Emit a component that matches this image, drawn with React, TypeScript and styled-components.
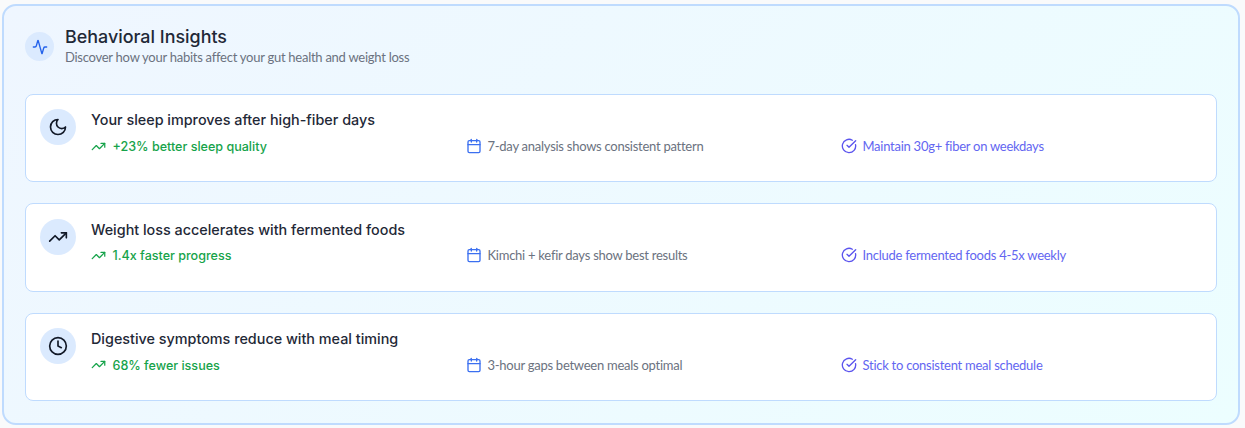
import React from "react";
import styled, { createGlobalStyle } from "styled-components";

const Global = createGlobalStyle`
  html, body { margin: 0; padding: 0; background: #f9fafb; }
  body { font-family: Inter, "Liberation Sans", sans-serif; }
`;

const Page = styled.div`
  padding: 4px 5px 3px 2px;
  height: 428px;
  box-sizing: border-box;
`;

const Panel = styled.section`
  box-sizing: border-box;
  height: 421px;
  border: 2px solid #bfdbfe;
  border-radius: 14px;
  background: linear-gradient(135deg, #eff6ff, #ecfeff);
  padding: 19px 21px 22px 21px;
  display: flex;
  flex-direction: column;
`;

const Header = styled.header`
  display: flex;
  align-items: center;
  gap: 11px;
  margin-bottom: 26px;
  height: 43px;
`;

const HeaderIcon = styled.div`
  width: 29px;
  height: 29px;
  border-radius: 50%;
  background: #dbeafe;
  color: #2563eb;
  display: flex;
  align-items: center;
  justify-content: center;
  margin-top: 1px;
`;

const HeaderText = styled.div`
  align-self: flex-start;
  display: flex;
  flex-direction: column;
`;

const Title = styled.h2`
  margin: 0;
  font-size: 17.9px;
  line-height: 24px;
  font-weight: 500;
  color: #1f2937;
`;

const Subtitle = styled.p`
  margin: 0;
  font-family: Lato, sans-serif;
  font-size: 13px;
  letter-spacing: -0.26px;
  line-height: 17px;
  color: #6b7280;
`;

const List = styled.div`
  display: flex;
  flex-direction: column;
  gap: 21px;
`;

const Card = styled.article`
  box-sizing: border-box;
  height: 88.4px;
  background: #fff;
  border: 1px solid #bfdbfe;
  border-radius: 8px;
  padding: 14.4px 14px 14px;
  display: flex;
  gap: 15px;
`;

const CardIcon = styled.div`
  flex: none;
  width: 36px;
  height: 36px;
  border-radius: 50%;
  background: #dbeafe;
  color: #111827;
  display: flex;
  align-items: center;
  justify-content: center;
`;

const CardBody = styled.div`
  flex: 1;
  min-width: 0;
`;

const CardTitle = styled.h3`
  margin: 0 0 5.8px;
  font-size: 14.36px;
  line-height: 21px;
  font-weight: 500;
  color: #1f2937;
`;

const Columns = styled.div`
  display: grid;
  grid-template-columns: repeat(3, 360px);
  column-gap: 15px;
`;

const Cell = styled.div`
  display: flex;
  align-items: center;
  gap: 5.5px;
  height: 20px;
  svg { flex: none; color: ${p => p.$iconColor}; }
`;

const Metric = styled.span`
  margin-left: 1px;
  padding-top: 0.6px;
  font-size: 12.55px;
  font-weight: 500;
  color: #16a34a;
`;

const Note = styled.span`
  font-family: Lato, sans-serif;
  font-size: 13px;
  letter-spacing: -0.26px;
  color: ${p => p.$color};
`;

const Icon = ({ size, children }: { size: number; children: React.ReactNode }) => (
  <svg width={size} height={size} viewBox="0 0 24 24" fill="none" stroke="currentColor" strokeWidth={2} strokeLinecap="round" strokeLinejoin="round">
    {children}
  </svg>
);

const Trend = ({ size }: { size: number }) => (
  <Icon size={size}>
    <polyline points="22 7 13.5 15.5 8.5 10.5 2 17" />
    <polyline points="16 7 22 7 22 13" />
  </Icon>
);

const Moon = () => (
  <Icon size={20}><path d="M12 3a6 6 0 0 0 9 9 9 9 0 1 1-9-9Z" /></Icon>
);

const Clock = () => (
  <Icon size={20}><circle cx="12" cy="12" r="10" /><polyline points="12 6 12 12 16 14" /></Icon>
);

const Calendar = () => (
  <Icon size={16}>
    <path d="M8 2v4" /><path d="M16 2v4" />
    <rect width="18" height="18" x="3" y="4" rx="2" />
    <path d="M3 10h18" />
  </Icon>
);

const Check = () => (
  <Icon size={16}>
    <path d="M21.801 10A10 10 0 1 1 17 3.335" />
    <path d="m9 11 3 3L22 4" />
  </Icon>
);

const insights = [
  { icon: <Moon />, title: "Your sleep improves after high-fiber days", metric: "+23% better sleep quality", note: "7-day analysis shows consistent pattern", action: "Maintain 30g+ fiber on weekdays" },
  { icon: <Trend size={20} />, title: "Weight loss accelerates with fermented foods", metric: "1.4x faster progress", note: "Kimchi + kefir days show best results", action: "Include fermented foods 4-5x weekly" },
  { icon: <Clock />, title: "Digestive symptoms reduce with meal timing", metric: "68% fewer issues", note: "3-hour gaps between meals optimal", action: "Stick to consistent meal schedule" },
];

export default function App() {
  return (
    <Page>
      <Global />
      <Panel>
        <Header>
          <HeaderIcon>
            <Icon size={16}><path d="M22 12h-2.48a2 2 0 0 0-1.93 1.46l-2.35 8.36a.25.25 0 0 1-.48 0L9.24 2.18a.25.25 0 0 0-.48 0l-2.35 8.36A2 2 0 0 1 4.49 12H2" /></Icon>
          </HeaderIcon>
          <HeaderText>
            <Title>Behavioral Insights</Title>
            <Subtitle>Discover how your habits affect your gut health and weight loss</Subtitle>
          </HeaderText>
        </Header>
        <List>
          {insights.map(i => (
            <Card key={i.title}>
              <CardIcon>{i.icon}</CardIcon>
              <CardBody>
                <CardTitle>{i.title}</CardTitle>
                <Columns>
                  <Cell $iconColor="#16a34a"><Trend size={15} /><Metric>{i.metric}</Metric></Cell>
                  <Cell $iconColor="#3b6ff0"><Calendar /><Note $color="#6b7280">{i.note}</Note></Cell>
                  <Cell $iconColor="#5b54ee"><Check /><Note $color="#6366f1">{i.action}</Note></Cell>
                </Columns>
              </CardBody>
            </Card>
          ))}
        </List>
      </Panel>
    </Page>
  );
}
